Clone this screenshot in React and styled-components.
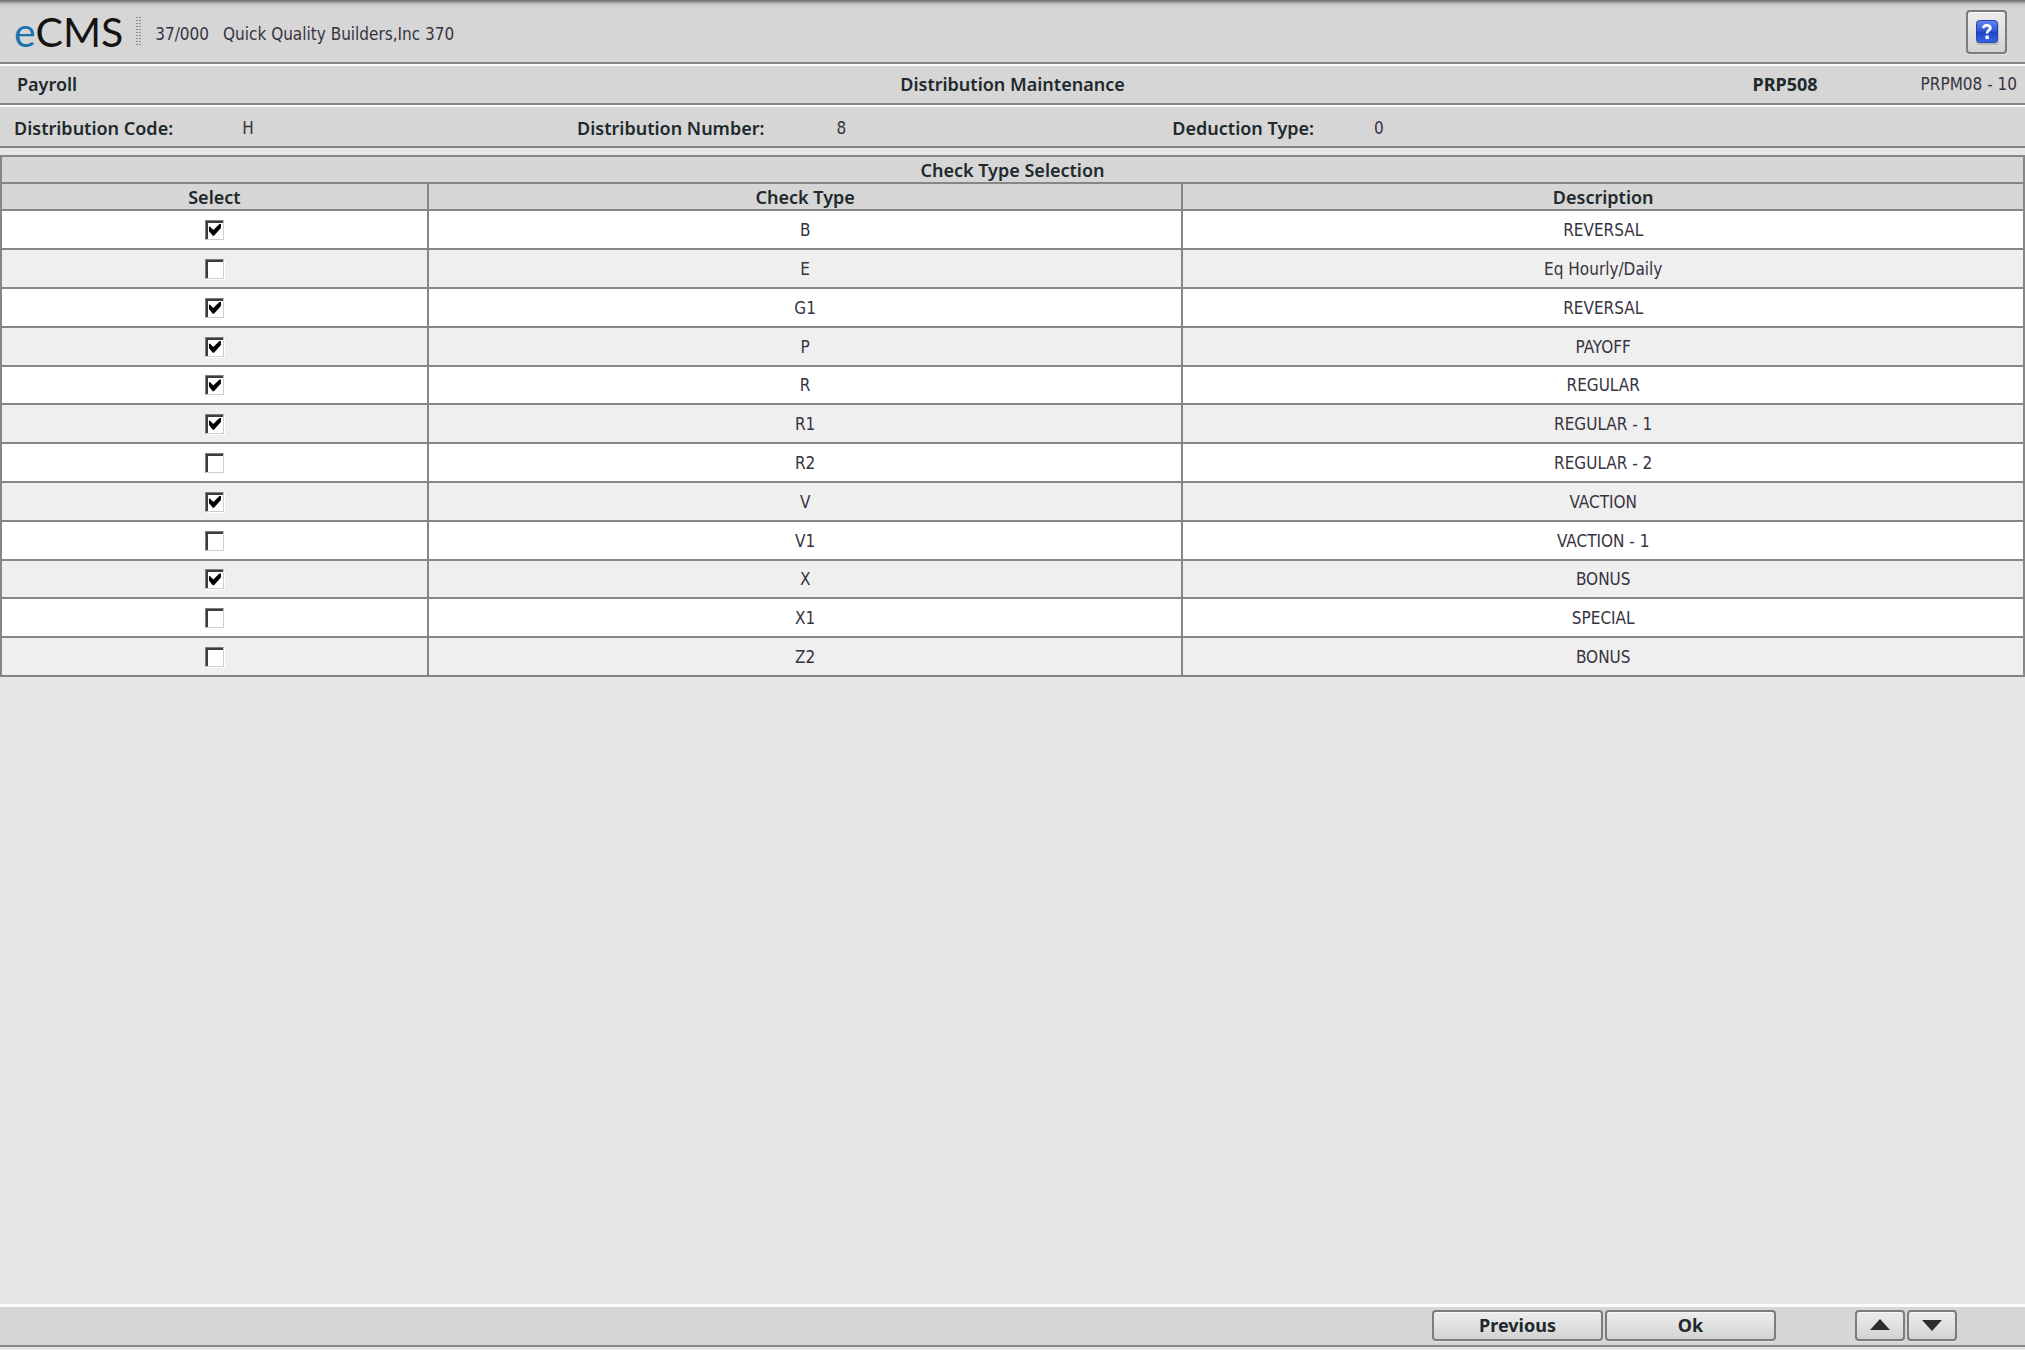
import React, { useState } from "react";
import styled, { createGlobalStyle } from "styled-components";

const color = {
  page: "#e7e7e7",
  bar: "#d6d6d6",
  stripe: "#efefef",
  line: "#868686",
  heading: "#20292c",
  text: "#37333f",
  brand: "#1a72b0",
};

const GlobalStyle = createGlobalStyle`
  *, *::before, *::after { box-sizing: border-box; }
  body {
    margin: 0;
    background: ${color.page};
    color: ${color.text};
    font: 17px/24px "DejaVu Sans Condensed", "DejaVu Sans", sans-serif;
  }
`;

const Page = styled.div`
  display: flex;
  flex-direction: column;
  min-height: 100vh;
`;

const Bar = styled.div`
  display: flex;
  align-items: center;
  background: ${color.bar};
  border-bottom: 2px solid ${color.line};
`;

const TopBar = styled(Bar).attrs({ as: "header" })`
  height: 64px;
  padding: 2px 18px 0 14px;
  background: linear-gradient(#727272, #8c8c8c 2px, #b4b4b4 3px, #cccccc 5px, ${color.bar} 8px);
`;

const Logo = styled.span`
  font: 41px/48px Lato, sans-serif;
  color: #141414;
`;

const LogoAccent = styled.span`
  color: ${color.brand};
`;

const Grip = styled.span`
  width: 6px;
  height: 30px;
  margin: 0 14px 0 12px;
  background-image: linear-gradient(#9a9a9a, #9a9a9a);
  background-image: conic-gradient(from 90deg at 1px 1px, transparent 270deg, #8c8c8c 0);
  background-size: 3px 3px;
`;

const Company = styled.div`
  display: flex;
  gap: 14px;
  flex: 1;
  padding-top: 4px;
`;

const Button = styled.button`
  display: flex;
  align-items: center;
  justify-content: center;
  width: ${(p) => p.$width};
  height: ${(p) => p.$height};
  padding: 0;
  border: 2px solid #7c7c7c;
  border-radius: 4px;
  background: linear-gradient(#ececec, #e2e2e2 45%, #d2d2d2);
  box-shadow: inset 0 1px 0 #f6f6f6, 0 1px 0 #e2e2e2;
  color: ${color.heading};
  font: 700 18px/24px "Noto Sans", sans-serif;
  cursor: pointer;
`;

const Raised = styled(Bar)`
  border-top: 2px solid #fafafa;
`;

const TitleBar = styled(Raised)`
  display: grid;
  grid-template-columns: 1fr auto 1fr;
  height: 41px;
  padding: 0 8px 1px;
`;

const Heading = styled.span`
  color: ${color.heading};
  font: 600 18px/24px "Noto Sans", sans-serif;
`;

const ModuleName = styled(Heading)`
  padding-left: 9px;
`;

const Title = styled(Heading).attrs({ as: "h1" })`
  margin: 0;
`;

const ProgramInfo = styled.div`
  display: flex;
  align-items: center;
  justify-content: flex-end;
  gap: 103px;
`;

const ProgramCode = styled(Heading)`
  font-weight: 700;
`;

const Fields = styled(Raised).attrs({ as: "dl" })`
  display: grid;
  grid-template-columns: 28% 29.6% 1fr;
  height: 43px;
  margin: 0;
  padding: 3px 0 0 14px;
`;

const Field = styled.div`
  display: flex;
  align-items: center;
  gap: ${(p) => p.$gap};
`;

const FieldLabel = styled(Heading).attrs({ as: "dt" })``;

const FieldValue = styled.dd`
  margin: 0;
`;

const Main = styled.main`
  flex: 1;
  padding-top: 7px;
`;

const Table = styled.table`
  width: 100%;
  border-collapse: collapse;
  table-layout: fixed;
  text-align: center;
`;

const Col = styled.col`
  width: ${(p) => p.$width};
`;

const HeadCell = styled.th`
  height: 27px;
  padding: 0;
  border: 2px solid ${color.line};
  background: ${color.bar};
  color: ${color.heading};
  font: 600 18px/24px "Noto Sans", sans-serif;
`;

const Row = styled.tr`
  height: 39px;
  background: #ffffff;

  &:nth-child(even) { background: ${color.stripe}; }
  &:nth-child(5n) { height: 38px; }
`;

const Cell = styled.td`
  padding: 0;
  border: 2px solid ${color.line};
`;

const Checkbox = styled.input.attrs({ type: "checkbox" })`
  appearance: none;
  display: block;
  width: 19px;
  height: 20px;
  margin: 0 auto;
  background: #ffffff;
  border: 1px solid;
  border-color: #7d7d7d #d2cec6 #d2cec6 #7d7d7d;
  box-shadow: inset 2px 2px 0 #3c3c3c, 1px 1px 0 #ffffff;

  &:checked::before {
    content: "";
    display: block;
    width: 12px;
    height: 13px;
    margin: 3px 0 0 3px;
    background: #000000;
    clip-path: polygon(0 26%, 8% 24%, 36% 50%, 88% 4%, 100% 4%, 100% 34%, 42% 94%, 32% 94%, 0 58%);
  }
`;

const Footer = styled(Bar).attrs({ as: "footer" })`
  justify-content: flex-end;
  gap: 2px;
  height: 43px;
  margin-bottom: 3px;
  padding: 0 68px 2px 14px;
  border-top: 3px solid #fbfbfb;
`;

const PagerGroup = styled.div`
  display: flex;
  gap: 2px;
  margin-left: 77px;
`;

const HelpIcon = () => (
  <svg width="26" height="28" viewBox="0 0 26 28" aria-hidden="true">
    <defs>
      <linearGradient id="help-fill" x1="0" y1="0" x2="0" y2="1">
        <stop offset="0" stopColor="#5f86ea" />
        <stop offset="0.48" stopColor="#3358d8" />
        <stop offset="0.52" stopColor="#1f42c4" />
        <stop offset="1" stopColor="#3a63e6" />
      </linearGradient>
    </defs>
    <rect x="2" y="3" width="23" height="24" rx="4" fill="#000" opacity="0.15" />
    <rect x="2.5" y="2.5" width="21" height="22" rx="3" fill="url(#help-fill)" stroke="#2446b4" />
    <path d="M9.5 10.2C9.5 6.2 16.8 6.4 16.3 10.2C16 12.4 13 12.4 13 15.6" fill="none" stroke="#fff" strokeWidth="2.8" />
    <rect x="11.4" y="17.6" width="3.4" height="3.4" fill="#fff" />
  </svg>
);

const Triangle = ({ down }) => (
  <svg width="20" height="12" viewBox="0 0 20 12" aria-hidden="true">
    <path d={down ? "M0 1H20L10 12Z" : "M0 11H20L10 0Z"} fill="#2d2d2d" />
  </svg>
);

const checkTypes = [
  { code: "B", description: "REVERSAL", selected: true },
  { code: "E", description: "Eq Hourly/Daily", selected: false },
  { code: "G1", description: "REVERSAL", selected: true },
  { code: "P", description: "PAYOFF", selected: true },
  { code: "R", description: "REGULAR", selected: true },
  { code: "R1", description: "REGULAR - 1", selected: true },
  { code: "R2", description: "REGULAR - 2", selected: false },
  { code: "V", description: "VACTION", selected: true },
  { code: "V1", description: "VACTION - 1", selected: false },
  { code: "X", description: "BONUS", selected: true },
  { code: "X1", description: "SPECIAL", selected: false },
  { code: "Z2", description: "BONUS", selected: false },
];

export default function App() {
  const [rows, setRows] = useState(checkTypes);
  const toggle = (code) =>
    setRows(rows.map((r) => (r.code === code ? { ...r, selected: !r.selected } : r)));

  return (
    <>
      <GlobalStyle />
      <Page>
        <TopBar>
          <Logo>
            <LogoAccent>e</LogoAccent>CMS
          </Logo>
          <Grip />
          <Company>
            <span>37/000</span>
            <span>Quick Quality Builders,Inc 370</span>
          </Company>
          <Button type="button" aria-label="Help" $width="41px" $height="44px">
            <HelpIcon />
          </Button>
        </TopBar>

        <TitleBar>
          <ModuleName>Payroll</ModuleName>
          <Title>Distribution Maintenance</Title>
          <ProgramInfo>
            <ProgramCode>PRP508</ProgramCode>
            <span>PRPM08 - 10</span>
          </ProgramInfo>
        </TitleBar>

        <Fields>
          <Field $gap="69px">
            <FieldLabel>Distribution Code:</FieldLabel>
            <FieldValue>H</FieldValue>
          </Field>
          <Field $gap="72px">
            <FieldLabel>Distribution Number:</FieldLabel>
            <FieldValue>8</FieldValue>
          </Field>
          <Field $gap="60px">
            <FieldLabel>Deduction Type:</FieldLabel>
            <FieldValue>0</FieldValue>
          </Field>
        </Fields>

        <Main>
          <Table>
            <colgroup>
              <Col $width="21.1%" />
              <Col $width="37.3%" />
              <Col />
            </colgroup>
            <thead>
              <tr>
                <HeadCell colSpan={3}>Check Type Selection</HeadCell>
              </tr>
              <tr>
                <HeadCell scope="col">Select</HeadCell>
                <HeadCell scope="col">Check Type</HeadCell>
                <HeadCell scope="col">Description</HeadCell>
              </tr>
            </thead>
            <tbody>
              {rows.map((row) => (
                <Row key={row.code}>
                  <Cell>
                    <Checkbox
                      aria-labelledby={`type-${row.code}`}
                      checked={row.selected}
                      onChange={() => toggle(row.code)}
                    />
                  </Cell>
                  <Cell id={`type-${row.code}`}>{row.code}</Cell>
                  <Cell>{row.description}</Cell>
                </Row>
              ))}
            </tbody>
          </Table>
        </Main>

        <Footer>
          <Button type="button" $width="171px" $height="31px">Previous</Button>
          <Button type="button" $width="171px" $height="31px">Ok</Button>
          <PagerGroup>
            <Button type="button" aria-label="Page up" $width="50px" $height="31px">
              <Triangle />
            </Button>
            <Button type="button" aria-label="Page down" $width="50px" $height="31px">
              <Triangle down />
            </Button>
          </PagerGroup>
        </Footer>
      </Page>
    </>
  );
}
